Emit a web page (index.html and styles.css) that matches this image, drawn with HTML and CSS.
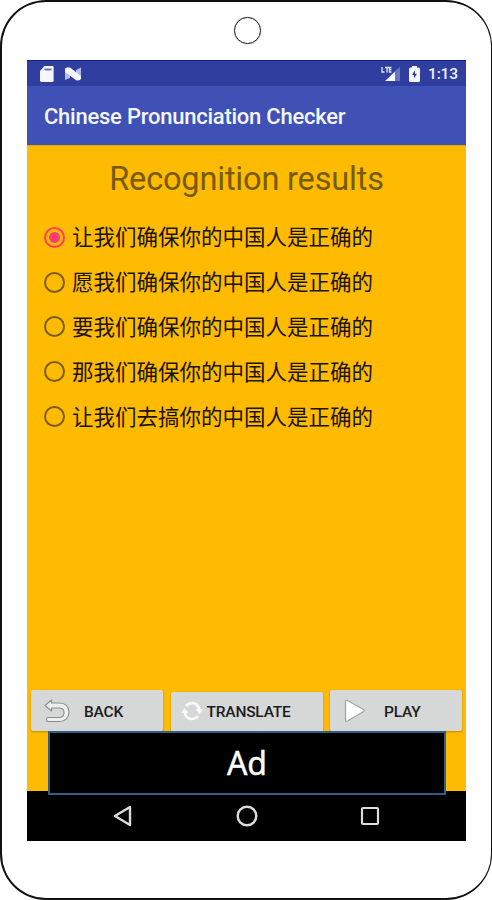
FILE: index.html
```html
<!DOCTYPE html>
<html lang="en">
<head>
<meta charset="utf-8">
<title>Chinese Pronunciation Checker</title>
<link rel="stylesheet" href="styles.css">
</head>
<body>
<div class="phone">
  <div class="camera"></div>
  <div class="screen">
    <div class="status">
      <svg class="sd" width="14" height="16" viewBox="0 0 14 16"><path d="M4.5 0H12.4Q13.6 0 13.6 1.3V14.6Q13.6 16 12.4 16H1.2Q0 16 0 14.6V5Z" fill="#f4f7ff"/><path d="M4.500 3.500H11.500" stroke="#5a68b5" stroke-width="1.800"/></svg>
      <svg class="nougat" width="16" height="14" viewBox="0 0 16 14"><path d="M0 1L5 4V11L0 13ZM11 3L16 .5V12L11 9Z" fill="#b4bde8"/><path d="M0 3Q0 .5 2 .5H5L16 9V12Q15 13.500 11.500 13.500L0 5Z" fill="#f4f7ff"/></svg>
      <span class="grow"></span>
      <svg class="signal" width="20" height="16" viewBox="0 0 20 16"><path d="M1 1V6H3.500M4 1.500H8M6 1V6.500M10.500 1.500H8.500V6H10.500M8.500 3.700H10.500" fill="none" stroke="#dfe5ff" stroke-width="1.300"/><path d="M19 1V15H14V5Z" fill="#6874be"/><path d="M14 5.500V15H4Z" fill="#f4f7ff"/></svg>
      <svg class="battery" width="11" height="16" viewBox="0 0 11 16"><path d="M3 1.500V0H8V1.500H9.500Q11 1.500 11 3V14.500Q11 16 9.500 16H1.500Q0 16 0 14.500V3Q0 1.500 1.500 1.500Z" fill="#f4f7ff"/><path d="M6 4L3 9H5V12.500L8 7.800H6Z" fill="#303f9f"/></svg>
      <span class="clock">1:13</span>
    </div>
    <div class="appbar"><span class="title">Chinese Pronunciation Checker</span></div>
    <div class="content">
      <h1><span>Recognition results</span></h1>
      <div class="list">
        <div class="row"><i class="radio on"></i><span>让我们确保你的中国人是正确的</span></div>
        <div class="row"><i class="radio"></i><span>愿我们确保你的中国人是正确的</span></div>
        <div class="row"><i class="radio"></i><span>要我们确保你的中国人是正确的</span></div>
        <div class="row"><i class="radio"></i><span>那我们确保你的中国人是正确的</span></div>
        <div class="row"><i class="radio"></i><span>让我们去搞你的中国人是正确的</span></div>
      </div>
      <div class="buttons">
        <div class="btn back"><svg width="26" height="24" viewBox="0 0 26 24"><path d="M1 6.500L7.500 1V4H15.500C21 4 25 7.500 25 13S21 22.500 15.500 22.500H4Q2.500 22.500 2.500 20.500T4 18.500H15C18 18.500 20 16.500 20 13.500S18 9 15 9H7.500V12Z" fill="#eeefef" stroke="#8b8d8d" stroke-width="1.100" stroke-linejoin="round"/></svg><span>BACK</span></div>
        <div class="btn translate"><svg width="22" height="20" viewBox="0 0 22 20"><g fill="none" stroke="#fafafa" stroke-width="2.600"><path d="M5 5Q8 1.600 12 2Q17.500 3 18.300 9"/><path d="M17 15Q14 18.400 10 18Q4.500 17 3.700 11"/></g><path d="M14.500 8H22L18.500 13ZM7.500 12H0L3.500 7Z" fill="#fafafa"/></svg><span>TRANSLATE</span></div>
        <div class="btn play"><svg width="22" height="24" viewBox="0 0 22 24"><path d="M1.500 2.400Q1.500.5 3.500 1.500L19.500 10.500Q21 11.500 19.500 12.500L3.500 22Q1.500 23 1.500 21Z" fill="#fff" stroke="#a3a5a5" stroke-width="1.300"/></svg><span>PLAY</span></div>
      </div>
    </div>
    <div class="nav">
      <svg width="20" height="22" viewBox="0 0 20 22"><path d="M17 2V20L2 11Z" fill="none" stroke="#ddd" stroke-width="2.400" stroke-linejoin="round"/></svg>
      <svg width="22" height="22" viewBox="0 0 22 22"><circle cx="11" cy="11" r="9.300" fill="none" stroke="#ddd" stroke-width="2.400"/></svg>
      <svg width="20" height="20" viewBox="0 0 20 20"><rect x="2" y="2" width="16" height="16" rx="1" fill="none" stroke="#ddd" stroke-width="2.200"/></svg>
    </div>
    <div class="ad"><span>Ad</span></div>
  </div>
</div>
</body>
</html>
```
FILE: styles.css
```css
* { box-sizing: border-box; }
body { margin: 0; background: #fff; font-family: Roboto, "Noto Sans CJK SC", sans-serif; }
svg { display: block; flex: none; }
.phone { width: 492px; height: 900px; border: 2px solid #111; border-right-width: 1px; border-radius: 46px; padding: 15px 0 0 25px; background: #fff; }
.camera { width: 27px; height: 27px; border: 1.500px solid #222; border-radius: 50%; margin: 0 0 16px 207px; box-shadow: 0 0 1px #444; }
.screen { position: relative; width: 439px; height: 781px; display: flex; flex-direction: column; background: #000; }
.status { height: 26px; background: #303f9f; border-top: 1px solid #101d9a; display: flex; align-items: center; padding: 0 8px 0 13px; }
.nougat { margin-left: 11px; }
.grow { flex: 1; }
.battery { margin-left: 8px; }
.clock { margin-left: 8px; width: 30px; font-size: 15.500px; letter-spacing: -.15px; font-weight: 500; color: #eef1ff; white-space: nowrap; }
.appbar { height: 59px; background: #3f51b5; display: flex; align-items: center; padding: 2px 0 0 17px; }
.title { color: #f4f6ff; font-size: 22px; letter-spacing: -.240px; font-weight: 500; white-space: nowrap; }
.content { height: 646px; background: #ffba02; border-top: 1px solid #e3a70b; display: flex; flex-direction: column; }
h1 { margin: 0; height: 69px; padding-top: 13px; line-height: 40px; font-size: 32.500px; letter-spacing: -.180px; font-weight: 400; color: #765b09; text-align: center; }
.row { height: 44.800px; display: flex; align-items: center; gap: 7px; padding-left: 17px; font-size: 21.500px; color: #1a1402; white-space: nowrap; }
.row span { font-family: "Noto Sans CJK SC", sans-serif; line-height: 30px; padding-bottom: 2px; }
.radio { width: 21px; height: 21px; border: 2px solid #7a5d09; border-radius: 50%; flex: none; }
.radio.on { border-color: #ff4260; background: radial-gradient(circle, #ff3b73 0 5px, transparent 5.800px); }
.buttons { margin-top: auto; height: 101px; padding: 0 4px; display: flex; align-items: flex-start; justify-content: space-between; }
.btn { height: 41px; background: #d6d8d7; border-radius: 2px; box-shadow: 0 1px 2px rgba(90,60,0,.4); display: flex; align-items: center; font-size: 15.500px; letter-spacing: -.2px; font-weight: 500; color: #1c1c1c; }
.btn span { padding-top: 2px; }
.back { width: 132px; padding-left: 13px; gap: 14px; }
.translate { width: 152px; margin-top: 2px; padding: 0 0 4px 10px; gap: 4px; }
.play { width: 132px; padding-left: 14px; gap: 18px; }
.nav { height: 50px; display: flex; justify-content: space-between; align-items: center; padding: 0 86px 0 86px; }
.ad { position: absolute; left: 21px; top: 671px; width: 398px; height: 64px; background: #000; border: 2px solid #315f83; display: flex; align-items: center; justify-content: center; padding-bottom: 2px; color: #fff; font-family: "Noto Sans", sans-serif; font-size: 32px; -webkit-text-stroke: .4px #fff; }
```
